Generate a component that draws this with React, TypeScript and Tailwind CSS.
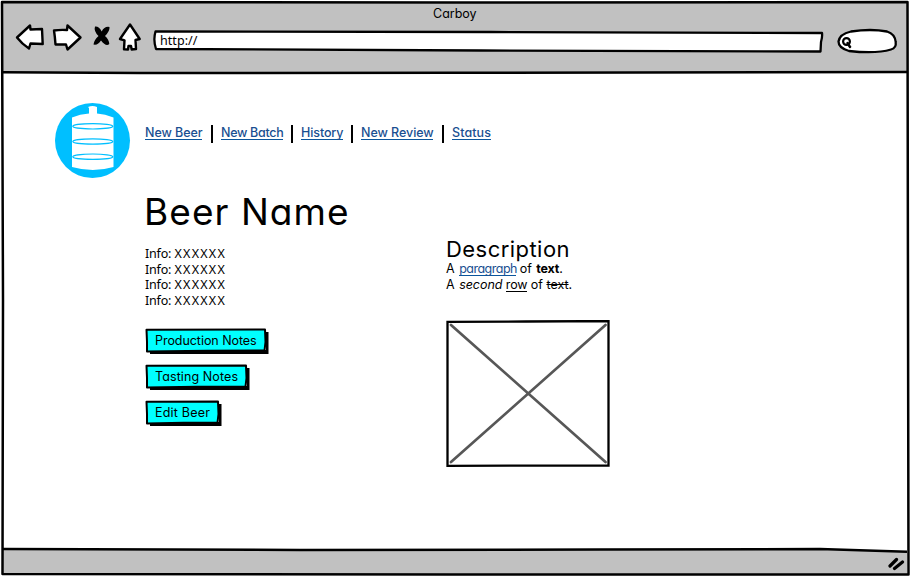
import React from "react";

const LINKS = [
  { label: "New Beer", box: "w-[58px]", line: "w-[57px]", track: "tracking-[-0.050px]" },
  { label: "New Batch", box: "w-[62px]", line: "w-[62px]", track: "tracking-[-0.300px]" },
  { label: "History", box: "w-[42px]", line: "w-[42px]", track: "tracking-[-0.100px]" },
  { label: "New Review", box: "w-[73px]", line: "w-[72px]", track: "tracking-[-0.050px]" },
  { label: "Status", box: "w-[39px]", line: "w-[39px]", track: "tracking-[0.100px]" },
];

const BUTTONS = [
  { label: "Production Notes", box: "w-[124px]", w: 124, track: "tracking-[-0.050px]" },
  { label: "Tasting Notes", box: "w-[105px]", w: 105, track: "tracking-[0.100px]" },
  { label: "Edit Beer", box: "w-[77px]", w: 77, track: "tracking-[0.200px]" },
];

function NavIcons() {
  return (
    <svg width="146" height="69" viewBox="0 0 146 69" fill="#fff" stroke="#000" strokeWidth="2.4" strokeLinejoin="round" strokeLinecap="round">
      <path d="M17 34.500 30 22.500 30.500 26.500 42 26 42.700 41 30.500 40.500 29 45.500Q22 41 17 34.500Z" />
      <path d="M54 27.500Q60 26.500 67 27L67.500 22.500 80.500 34.500 67.500 46.500 66 41.500 55.500 41.500Q55 34 54 27.500Z" />
      <path d="M95 23.500Q99 23 101.700 28.500Q104.500 23 109.500 24Q110 28 105 33Q109 36.500 109.300 41Q106 44 101 37.500Q98 42.500 93.500 41.500Q94 37 98.500 33Q93.500 28 95 23.500Z" fill="#000" stroke="none" />
      <path d="M130 21.500 139.700 36 135.500 37 136 46 131.700 46.500 131 43 128.500 43 128 46.500 124 46.300 124.500 37.300 120 36Z" />
    </svg>
  );
}

function Logo() {
  return (
    <svg width="76" height="76" viewBox="0 0 76 76" className="shrink-0">
      <circle cx="37.500" cy="37.500" r="37.500" fill="#00bfff" />
      <path d="M33 4Q37.500 2 42 4V10.500Q50 11 58.500 14.500V64Q38 70 17 64V14.500Q25 11 34 10.500V5Z" fill="#fff" />
      <g fill="none" stroke="#00bfff" strokeWidth="1.200">
        <ellipse cx="37.800" cy="23.300" rx="20" ry="2.700" />
        <ellipse cx="37.800" cy="38.500" rx="20" ry="2.700" />
        <ellipse cx="37.800" cy="53.700" rx="20" ry="2.700" />
      </g>
    </svg>
  );
}

function SketchButton({ label, box, w, track }: { label: string; box: string; w: number; track: string }) {
  return (
    <button className={`relative block h-[27px] text-left ${box}`}>
      <svg className="absolute inset-0" width={w} height="27" viewBox={`0 0 ${w} 27`}>
        <path d={`M5 22V26H${w - 0.5}V4H${w - 3}V22Z`} fill="#000" stroke="none" />
        <path d={`M1.500 1.800 ${w - 4} 1.500 ${w - 3.500} 14 ${w - 4.5} 22.500 ${w / 2} 22.800 2 23.500 2 14Z`} fill="#0ff" stroke="#000" strokeWidth="2" strokeLinejoin="round" />
      </svg>
      <span className={`relative block whitespace-nowrap pb-[2px] pl-[10px] text-[12.500px] leading-[24px] ${track}`}>{label}</span>
    </button>
  );
}

function InfoRow() {
  return (
    <li>
      <span className="inline-block w-[29.500px] tracking-[-0.200px]">Info:</span>
      <span className="tracking-[1.250px]">XXXXXX</span>
    </li>
  );
}

export default function App() {
  return (
    <div className="relative flex h-[577px] w-[910px] flex-col overflow-hidden bg-white px-[3px] pt-[3px] font-['Inter',sans-serif] text-[12.500px] leading-4 text-black [font-feature-settings:'cv11']">
      <header className="flex h-[70px] shrink-0 bg-[#c1c1c1]">
        <div className="-ml-[3px] w-[151px] shrink-0"><NavIcons /></div>
        <div className="w-[674px] shrink-0">
          <h1 className="h-[27px] pl-[282px] pt-[3px] text-[12.500px]">Carboy</h1>
          <div className="relative h-[24px]">
            <svg className="absolute inset-0" width="674" height="24" viewBox="0 0 674 24">
              <path d="M4.500 1.500 340 2 671 3Q671.500 7 670 12L669.500 21.500 330 20.500 5 19Q2 10 4.500 1.500Z" fill="#fff" stroke="#000" strokeWidth="2.300" strokeLinejoin="round" />
            </svg>
            <span className="relative block pl-[9px] pt-[3px] font-['Noto_Sans',sans-serif] text-[12.500px] leading-4 tracking-[0.050px]">http://</span>
          </div>
        </div>
        <svg className="ml-[11px] mt-[24px] shrink-0" width="64" height="30" viewBox="0 0 64 30" fill="#fff" stroke="#000" strokeWidth="2.300" strokeLinejoin="round" strokeLinecap="round">
          <path d="M15 4.500Q35 1.500 51 4.500Q59 7 59.700 15Q60.500 21 55 22.500Q40 27 13 24Q2.500 21 2.500 14.500Q3.500 7 15 4.500Z" />
          <circle cx="10.500" cy="14.500" r="3.400" strokeWidth="2.200" />
          <path d="M11.500 16 14 20" strokeWidth="2.400" />
        </svg>
      </header>

      <main className="flex h-[477px] shrink-0 pl-[52px] pt-[30px]">
        <Logo />
        <div className="flex-1 pl-[14px]">
          <nav className="flex h-[53px] items-start pt-[22px] text-[#1a4f91] [font-weight:450]">
            {LINKS.map((l, i) => (
              <React.Fragment key={l.label}>
                {i > 0 && <span className="mx-[8px] h-[18px] w-[2px] shrink-0 bg-black" />}
                <span className={`shrink-0 ${l.box}`}>
                  <a className={`block h-[15px] whitespace-nowrap border-b border-[#0b559c] leading-4 ${l.line} ${l.track}`}>{l.label}</a>
                </span>
              </React.Fragment>
            ))}
          </nav>
          <h2 className="-ml-px mt-[33px] h-[49px] whitespace-nowrap text-[37px] leading-[46px] tracking-[1.050px] [font-weight:430]">Beer Name</h2>
          <div className="flex">
            <section className="w-[301px]">
              <ul className="h-[72px] pt-[8px] font-['Noto_Sans',sans-serif] text-[12.500px] leading-[15.700px]">
                <InfoRow />
                <InfoRow />
                <InfoRow />
                <InfoRow />
              </ul>
              <div className="mt-[18px] flex flex-col gap-[9px]">
                {BUTTONS.map((b) => <SketchButton key={b.label} {...b} />)}
              </div>
            </section>
            <section>
              <h3 className="h-[23px] text-[22px] leading-[23px] tracking-[0.450px]">Description</h3>
              <p className="h-[16px] whitespace-nowrap leading-4">A <a className="ml-px inline-block h-[14px] w-[57px] border-b border-[#0b559c] leading-[14px] tracking-[-0.500px] text-[#1a4f91]">paragraph</a> of <b className="ml-px tracking-[-0.200px]">text</b>.</p>
              <p className="h-[16px] whitespace-nowrap leading-4">A <i className="ml-px tracking-[-0.050px]">second</i> <span className="inline-block h-[14px] border-b border-black leading-[14px] tracking-[-0.200px]">row</span> of <s>text</s>.</p>
              <svg className="mt-[27px]" width="164" height="148" viewBox="0 0 164 148" fill="none">
                <path d="M1.500 1.800 80 1.500 162.500 1V145.500L1.500 145.800Z" stroke="#000" strokeWidth="2.300" />
                <path d="M5 5 159.500 142M159.500 5 5 142" stroke="#575757" strokeWidth="2.700" strokeLinecap="round" />
              </svg>
            </section>
          </div>
        </div>
      </main>

      <footer className="flex h-[24px] shrink-0 justify-end bg-[#c1c1c1]">
        <svg width="19" height="24" viewBox="0 0 19 24" stroke="#000" strokeWidth="3.200" strokeLinecap="round">
          <path d="M2 16 8.500 9.500M6.500 18.500 14.500 12" />
        </svg>
      </footer>

      <svg className="pointer-events-none absolute inset-0" width="910" height="577" viewBox="0 0 910 577" fill="none" stroke="#000" strokeWidth="2.500" strokeLinejoin="round">
        <path d="M813 549 850 549.300 907 551.500V546H813Z" fill="#fff" stroke="none" />
        <path d="M2 2 455 2.500 907.500 2 908 300 908.500 574.500 450 574.500 2.500 574 3 300Z" />
        <path d="M3 72.300 140 73 450 72.800 907 72" />
        <path d="M3 549 300 550 600 549.500 820 549 907 551.800" />
      </svg>
    </div>
  );
}
